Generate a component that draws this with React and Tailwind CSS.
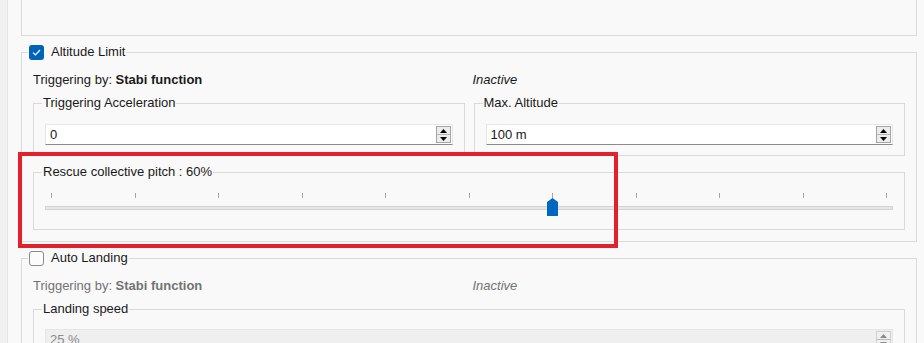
import React from "react";

const line = "border-[#dadada]";

function Check({ checked }) {
  if (checked) {
    return (
      <span className="flex items-center justify-center w-[15px] h-[15px] rounded-[3px] bg-[#0063b8]">
        <svg width="9" height="7" viewBox="0 0 9 7" fill="none">
          <path d="M1 3.6 L3.4 6 L8 1" stroke="#fff" strokeWidth="1.2" />
        </svg>
      </span>
    );
  }
  return (
    <span className="block w-[15px] h-[15px] rounded-[3px] border border-[#8c8c8c] bg-[#fbfbfb]" />
  );
}

function Spin({ disabled }) {
  const fill = disabled ? "#8a8a8a" : "#000";
  return (
    <div
      className={`flex flex-col w-[15px] h-[17px] border ${
        disabled ? "border-[#d0d0d0] bg-[#f0f0f0]" : "border-[#a5a5a5] bg-[#ececec]"
      }`}
    >
      <div className="flex-1 flex items-center justify-center border-b border-[#b8b8b8]">
        <svg width="7" height="4" viewBox="0 0 7 4">
          <path d="M0 4 L3.5 0 L7 4 Z" fill={fill} />
        </svg>
      </div>
      <div className="flex-1 flex items-center justify-center">
        <svg width="7" height="4" viewBox="0 0 7 4">
          <path d="M0 0 L3.5 4 L7 0 Z" fill={fill} />
        </svg>
      </div>
    </div>
  );
}

function NumberInput({ value, disabled }) {
  return (
    <div
      className={`flex items-center h-[21px] pl-[4px] pr-[1px] border ${
        disabled
          ? "bg-[#efefef] text-[#8a8a8a] border-[#e6e6e6]"
          : "bg-white border-[#e6e6e6] border-b-[#8b8b8b]"
      }`}
    >
      <span className="flex-1 leading-[16px]">{value}</span>
      <Spin disabled={disabled} />
    </div>
  );
}

function SubGroup({ title, children, className = "" }) {
  return (
    <fieldset className={`border ${line} min-w-0 ${className}`}>
      <legend className="ml-[8px] px-[1px] leading-[16px]">{title}</legend>
      {children}
    </fieldset>
  );
}

function Triggering({ disabled }) {
  return (
    <div
      className={`grid grid-cols-2 gap-x-[9px] leading-[16px] ${
        disabled ? "text-[#737373]" : "text-[#1a1a1a]"
      }`}
    >
      <div>
        Triggering by: <span className="font-bold">Stabi function</span>
      </div>
      <div className="italic -ml-[1px]">Inactive</div>
    </div>
  );
}

export default function App() {
  const ticks = Array.from({ length: 11 });
  return (
    <div
      className="flex h-[343px] w-[924px] overflow-hidden bg-[#f9f9f9] text-[13px] text-[#1a1a1a]"
      style={{ fontFamily: '"Liberation Sans", Arial, sans-serif' }}
    >
      <div className="w-[8px] shrink-0 bg-[#f1f1f1] border-r border-[#e4e4e4]" />
      <div className="relative flex flex-col w-[916px] pl-[13px] pr-[7px]">
        {/* top box */}
        <div className={`h-[36px] shrink-0 border-x border-b ${line}`} />

        {/* Altitude Limit */}
        <fieldset className={`mt-[8px] shrink-0 border ${line} min-w-0`}>
          <legend className="ml-[6px] px-[1px] flex items-center gap-[7px] h-[16px]">
            <Check checked />
            <span>Altitude Limit</span>
          </legend>
          <div className="px-[11px] pt-[12px] pb-[11px]">
            <Triggering />
            <div className="grid grid-cols-2 gap-x-[9px] mt-[7px]">
              <SubGroup title="Triggering Acceleration">
                <div className="px-[11px] pt-[13px] pb-[10px]">
                  <NumberInput value="0" />
                </div>
              </SubGroup>
              <SubGroup title="Max. Altitude">
                <div className="px-[11px] pt-[13px] pb-[10px]">
                  <NumberInput value="100 m" />
                </div>
              </SubGroup>
            </div>
            <SubGroup title="Rescue collective pitch : 60%" className="mt-[8px]">
              <div className="px-[11px] pt-[13px] pb-[13px]">
                <div className="relative h-[23px]">
                  <div className="flex justify-between px-[6px]">
                    {ticks.map((_, i) => (
                      <div key={i} className="w-px h-[5px] bg-[#a3a3a3]" />
                    ))}
                  </div>
                  <div className="mt-[8px] h-[4px] bg-[#e6e6e6] border border-[#d4d4d4]" />
                  <svg
                    className="absolute left-[502px] top-[5px]"
                    width="11"
                    height="18"
                    viewBox="0 0 11 18"
                  >
                    <path d="M0 4 L5.5 0 L11 4 L11 18 L0 18 Z" fill="#0067c0" />
                  </svg>
                </div>
              </div>
            </SubGroup>
          </div>
        </fieldset>

        {/* Auto Landing */}
        <fieldset className={`mt-[8px] shrink-0 border ${line} min-w-0`}>
          <legend className="ml-[6px] px-[1px] flex items-center gap-[7px] h-[16px]">
            <Check />
            <span>Auto Landing</span>
          </legend>
          <div className="px-[11px] pt-[12px] pb-[11px]">
            <Triggering disabled />
            <SubGroup title="Landing speed" className="mt-[7px]">
              <div className="px-[11px] pt-[12px] pb-[10px]">
                <NumberInput value="25 %" disabled />
              </div>
            </SubGroup>
          </div>
        </fieldset>

        {/* annotation highlight */}
        <div className="absolute left-[10px] top-[152px] w-[600px] h-[96px] border-[4px] border-[#e3212b]" />
      </div>
    </div>
  );
}
